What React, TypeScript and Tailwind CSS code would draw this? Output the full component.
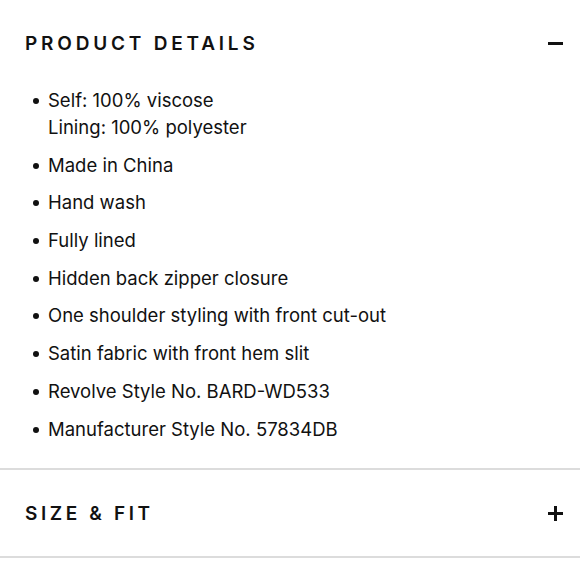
import React from 'react';

const details = [
  ['Self: 100% viscose', 'Lining: 100% polyester'],
  ['Made in China'],
  ['Hand wash'],
  ['Fully lined'],
  ['Hidden back zipper closure'],
  ['One shoulder styling with front cut-out'],
  ['Satin fabric with front hem slit'],
  ['Revolve Style No. BARD-WD533'],
  ['Manufacturer Style No. 57834DB'],
];

const App: React.FC = () => {
  return (
    <div className="w-[580px] bg-white text-[#111]" style={{ fontFamily: 'Inter, "Open Sans", sans-serif' }}>
      {/* Product details (open) */}
      <div className="border-b-2 border-[#dcdcdc]">
        <button className="w-full h-[87px] flex items-center justify-between pl-[25px] pr-[17px]">
          <span className="text-[19px] font-semibold tracking-[3.8px] mt-[1px]">PRODUCT DETAILS</span>
          <span className="block w-[15px] h-[3px] bg-[#111]" />
        </button>
        <ul className="pl-[33px] pb-[25px] flex flex-col gap-[10.7px]">
          {details.map((lines, i) => (
            <li key={i} className="flex items-start">
              <span className="mt-[11px] w-[6px] h-[6px] rounded-full bg-[#111] shrink-0" />
              <div className="ml-[9px] text-[18.5px] leading-[27px]">
                {lines.map((l) => (
                  <div key={l}>{l}</div>
                ))}
              </div>
            </li>
          ))}
        </ul>
      </div>

      {/* Size & fit (closed) */}
      <div className="border-b-2 border-[#dcdcdc]">
        <button className="w-full h-[86px] flex items-center justify-between pl-[25px] pr-[17px]">
          <span className="text-[19px] font-semibold tracking-[3.6px] mt-[3px]">SIZE &amp; FIT</span>
          <span className="relative block w-[15px] h-[15px] mt-[1px]">
            <span className="absolute left-0 top-[6px] w-[15px] h-[3px] bg-[#111]" />
            <span className="absolute top-0 left-[6px] w-[3px] h-[15px] bg-[#111]" />
          </span>
        </button>
      </div>
    </div>
  );
};

export default App;
